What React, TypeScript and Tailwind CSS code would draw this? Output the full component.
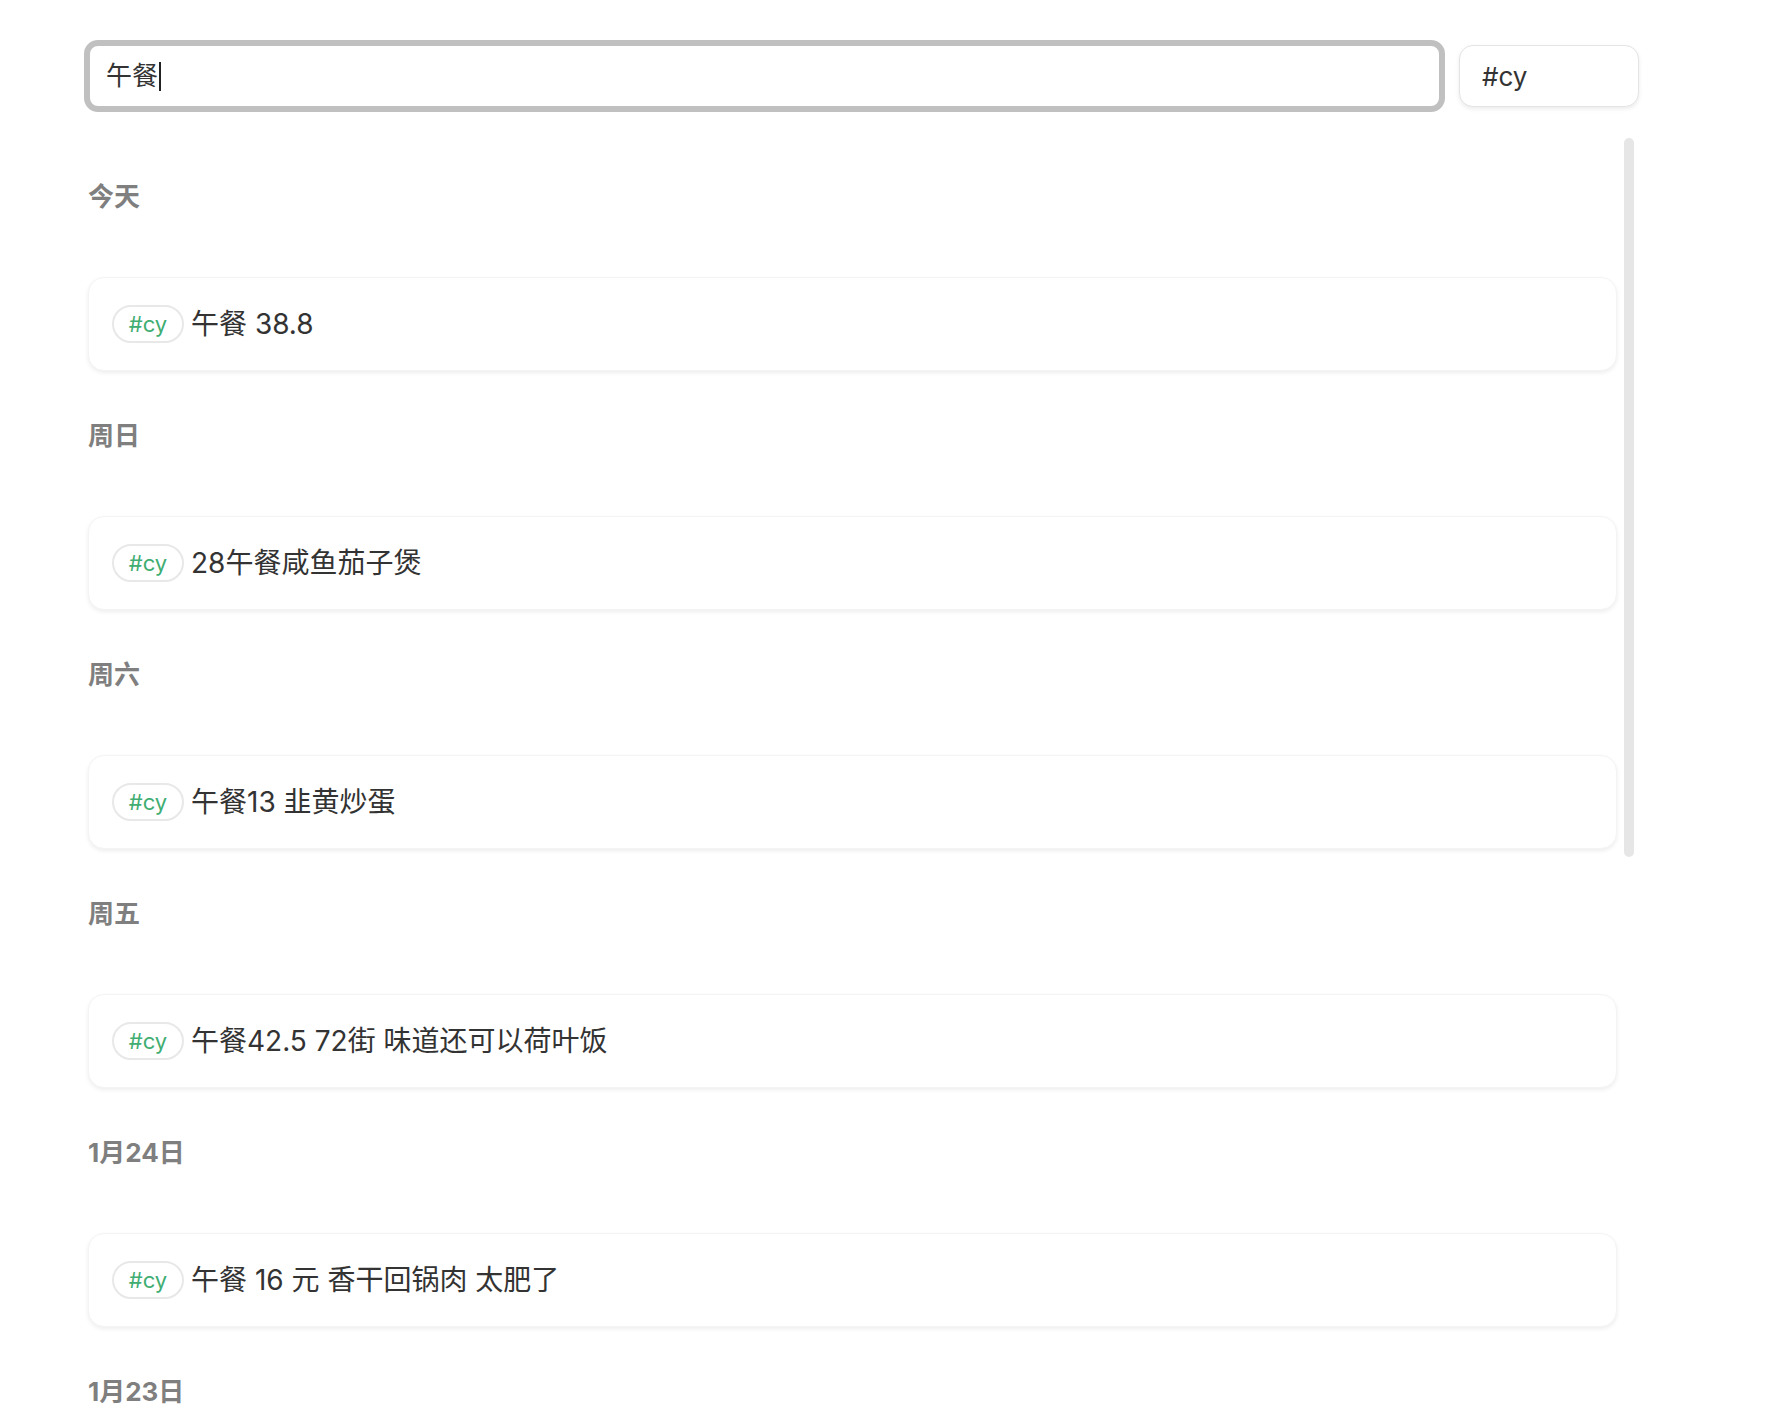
const FONT = "font-['Inter','Noto_Sans_CJK_SC',sans-serif]";

interface Entry {
  day: string;
  text?: string;
}

const ENTRIES: Entry[] = [
  { day: "今天", text: "午餐 38.8" },
  { day: "周日", text: "28午餐咸鱼茄子煲" },
  { day: "周六", text: "午餐13 韭黄炒蛋" },
  { day: "周五", text: "午餐42.5 72街 味道还可以荷叶饭" },
  { day: "1月24日", text: "午餐 16 元 香干回锅肉 太肥了" },
  { day: "1月23日" },
];

function Tag({ label }: { label: string }) {
  return (
    <span className="flex h-[38px] w-[72px] shrink-0 items-center justify-center rounded-full border-2 border-[#e8e8e8] text-[22px] leading-none text-[#40ad72]">
      {label}
    </span>
  );
}

export default function App() {
  return (
    <div className={`${FONT} h-screen overflow-hidden bg-white pl-[84px] pt-[40px]`}>
      {/* Search bar */}
      <div className="flex items-center gap-[14px]">
        <div className="flex h-[72px] w-[1361px] items-center rounded-[14px] border-[6px] border-[#c0c0c0] bg-white pl-[16px]">
          <span className="text-[26px] leading-none text-[#333333]">午餐</span>
          <span className="ml-[1px] h-[29px] w-[2px] bg-[#222222]" />
        </div>
        <div className="flex h-[62px] w-[180px] items-center rounded-[14px] border border-[#e4e4e4] bg-white pl-[22px] text-[26px] text-[#333333] shadow-[0_2px_4px_rgba(0,0,0,0.08)]">
          #cy
        </div>
      </div>

      {/* Results */}
      <div className="mt-[26px] flex items-start gap-[7px]">
        <div className="ml-[4px] flex w-[1529px] flex-col gap-[49px] pt-[43px]">
          {ENTRIES.map((e) => (
            <section key={e.day}>
              <h2 className="text-[26px] font-bold leading-[32px] text-[#7f7f7f]">{e.day}</h2>
              {e.text && (
                <div className="mt-[64px] flex h-[94px] items-center gap-[7px] rounded-[16px] border border-[#f4f4f4] bg-white pl-[23px] shadow-[0_2px_4px_rgba(0,0,0,0.07)]">
                  <Tag label="#cy" />
                  <span className="text-[28px] leading-none text-[#333333]">{e.text}</span>
                </div>
              )}
            </section>
          ))}
        </div>

        {/* Scrollbar */}
        <div className="w-[10px]">
          <div className="h-[719px] w-[10px] rounded-full bg-[#e6e6e6]" />
        </div>
      </div>
    </div>
  );
}
